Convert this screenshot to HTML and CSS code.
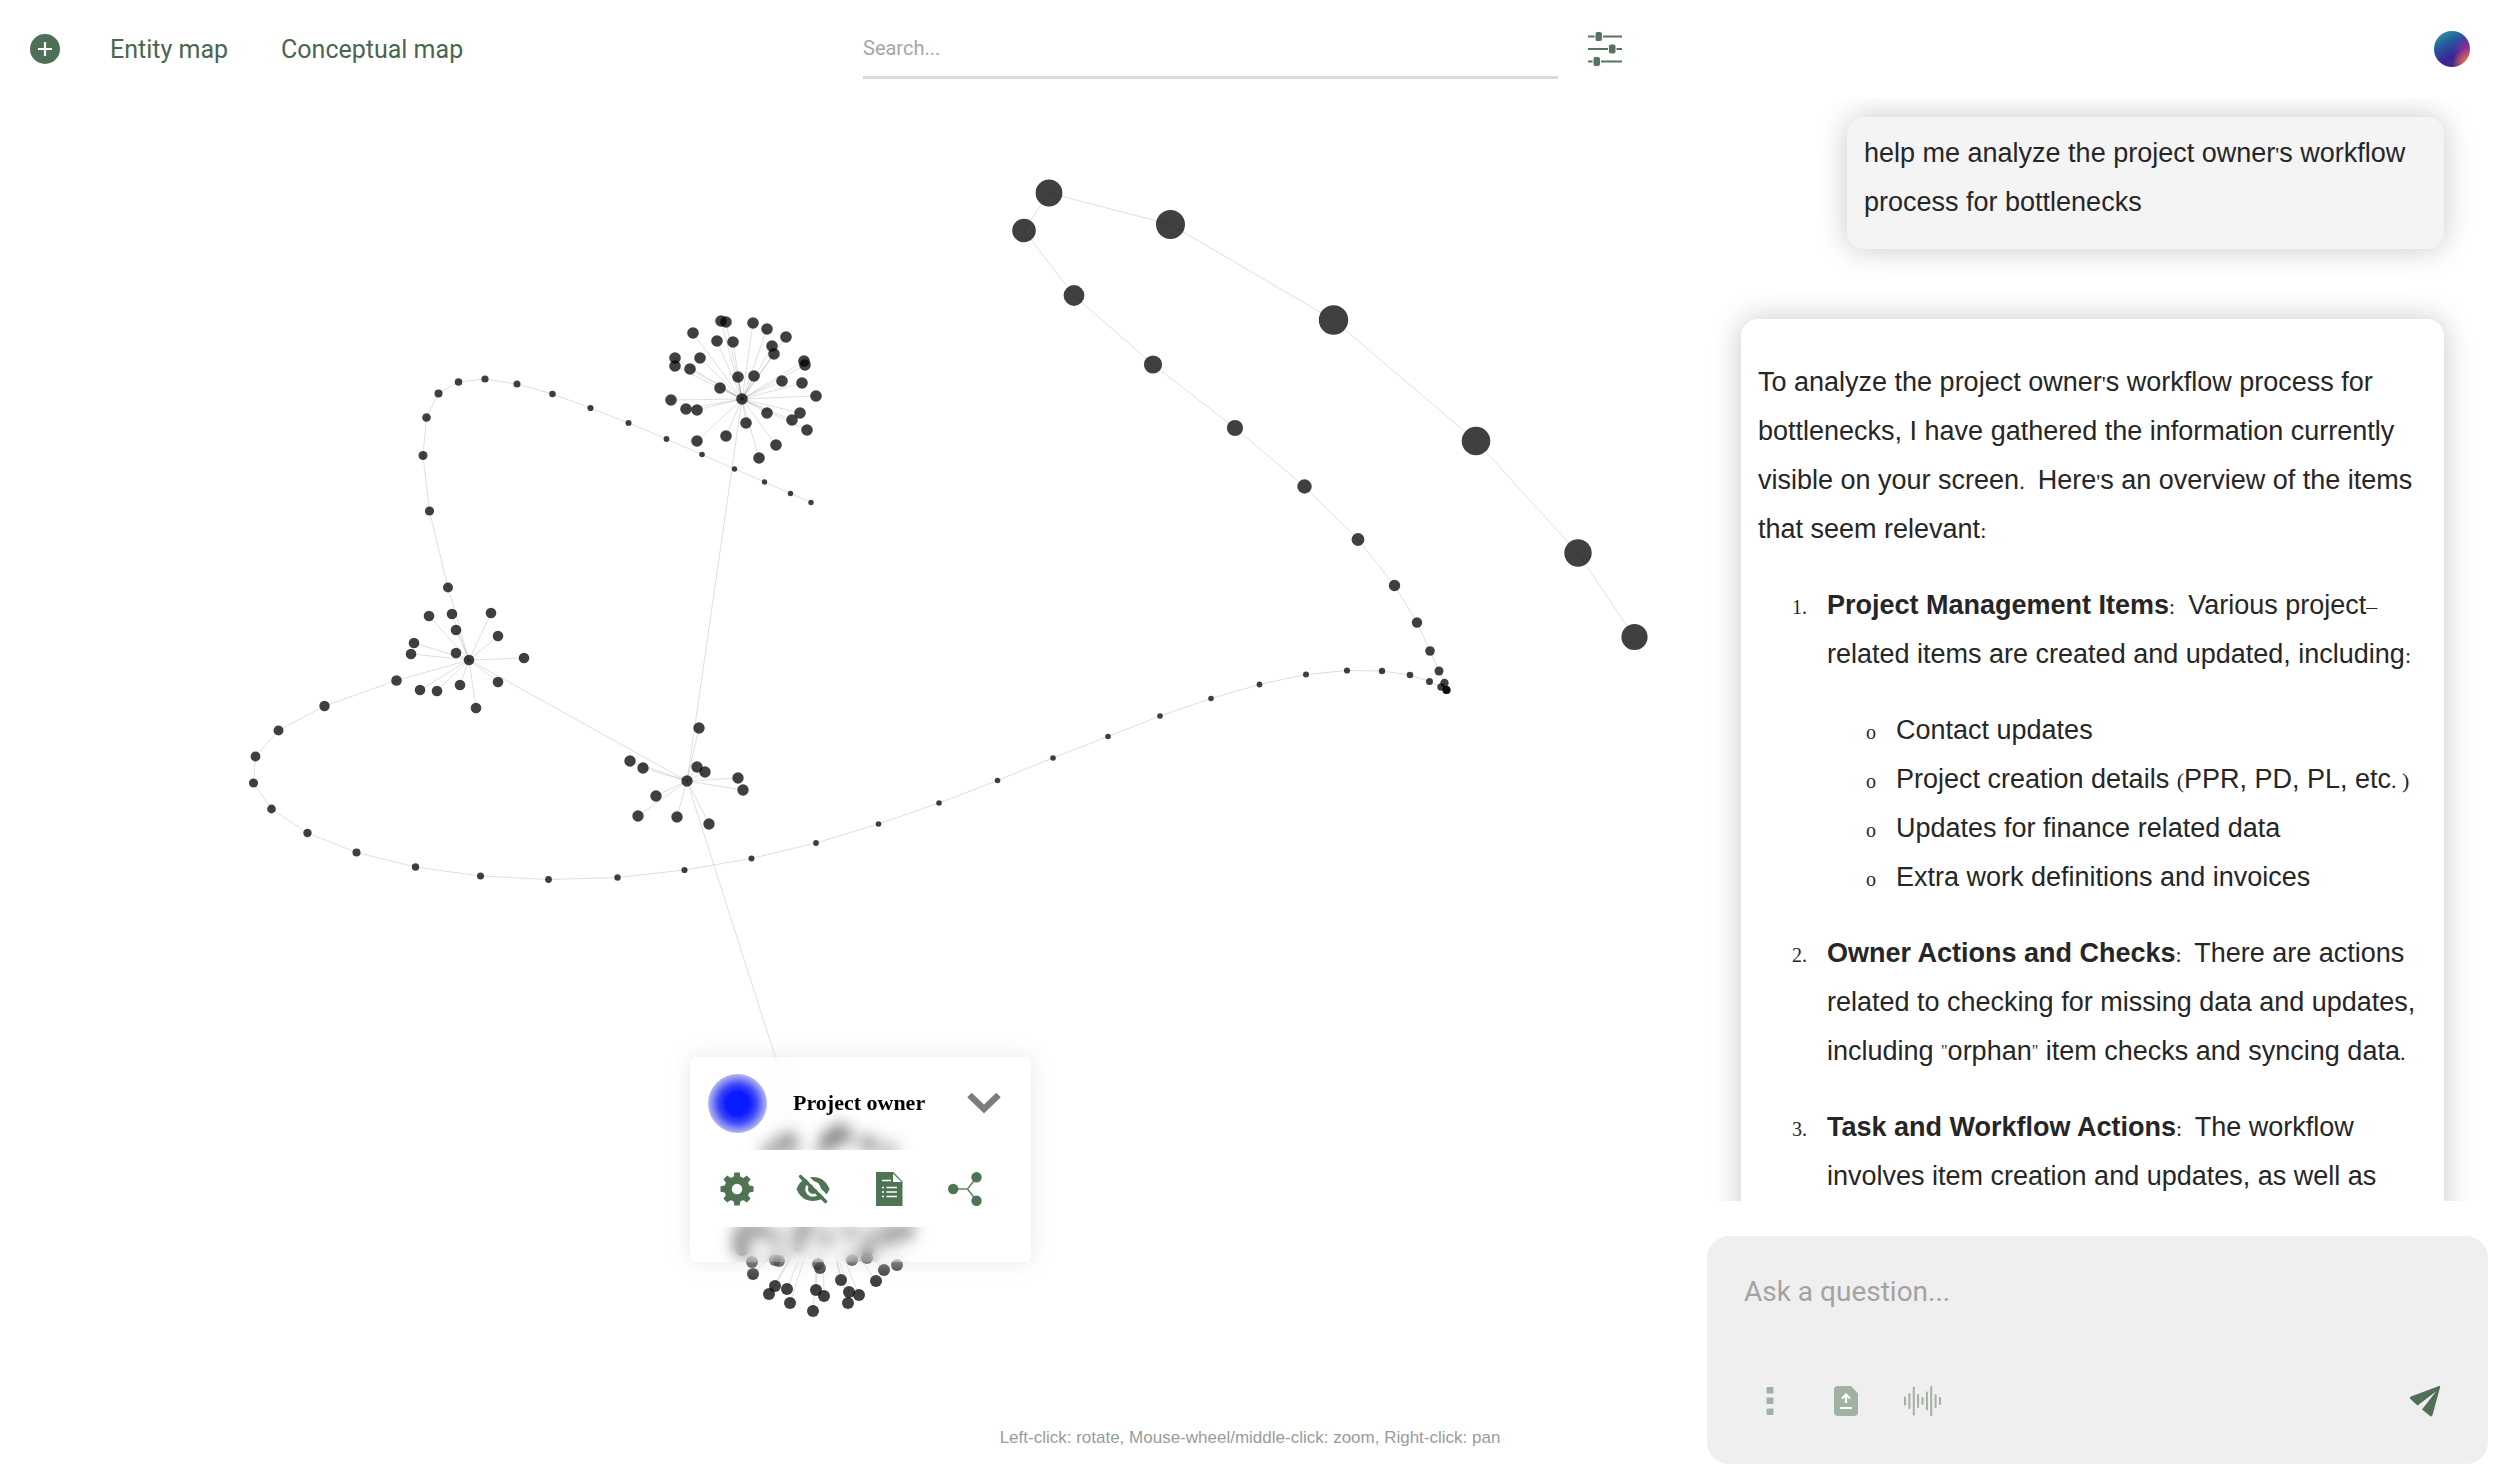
FILE: index.html
```html
<!DOCTYPE html>
<html lang="en">
<head>
<meta charset="utf-8">
<meta name="viewport" content="width=device-width, initial-scale=1">
<title>Entity map</title>
<link rel="stylesheet" href="styles.css">
</head>
<body>
<div class="app">
  <main class="map">
    <svg class="graph" id="graph" viewBox="0 0 2500 1470" preserveAspectRatio="xMidYMid meet" role="img" aria-label="Entity graph"></svg>
    <p class="hint">Left-click: rotate, Mouse-wheel/middle-click: zoom, Right-click: pan</p>
    <section class="card" aria-label="Project owner">
      <div class="card-head">
        <span class="orb"></span>
        <h2 class="card-title">Project owner</h2>
        <button class="card-toggle" type="button" aria-label="Expand">
          <svg width="34" height="22" viewBox="0 0 34 22"><path d="M2.500 3 17 17 31.500 3" fill="none" stroke="#7d7d7d" stroke-width="6.500"/></svg>
        </button>
      </div>
      <div class="card-tools">
        <button class="icon-btn" type="button" aria-label="Settings">
          <svg width="34" height="34" viewBox="0 0 34 34"><g fill="#4f7454"><path d="M14.300 0.500h5.400l1 6h-7.400zM14.300 33.500h5.400l1-6h-7.400z"/><path d="M0.500 14.300v5.400l6 1v-7.400zM33.500 14.300v5.400l-6 1v-7.400z"/><g transform="rotate(45 17 17)"><path d="M14.300 0.500h5.400l1 6h-7.400zM14.300 33.500h5.400l1-6h-7.400z"/><path d="M0.500 14.300v5.400l6 1v-7.400zM33.500 14.300v5.400l-6 1v-7.400z"/></g></g><circle cx="17" cy="17" r="9" fill="none" stroke="#4f7454" stroke-width="7.500"/></svg>
        </button>
        <button class="icon-btn" type="button" aria-label="Hide">
          <svg width="34" height="34" viewBox="0 0 34 34"><path d="M0.500 17C4 8.500 10 5 17 5s13 3.500 16.500 12C30 25.500 24 29 17 29S4 25.500 0.500 17z" fill="#4f7454"/><circle cx="17" cy="17" r="7.800" fill="#fff"/><circle cx="17" cy="17" r="5" fill="#4f7454"/><path d="M17 12a5 5 0 0 1 5 5h-5z" fill="#fff"/><path d="M7 1 34 28.500" stroke="#fff" stroke-width="4"/><path d="M4.500 4.500 29.500 29.500" stroke="#4f7454" stroke-width="3.400" stroke-linecap="round"/></svg>
        </button>
        <button class="icon-btn" type="button" aria-label="Document">
          <svg width="34" height="34" viewBox="0 0 34 34"><path d="M4 0h17.500L30.500 9.500V34H4z" fill="#4f7454"/><path d="M21 1.500 29.500 10H21z" fill="#fff"/><g stroke="#fff" stroke-width="1.700"><path d="M10 8.500h9M14.500 15.500H25M14.500 20H25M14.500 24.500H25"/><path d="M10 15.500h2M10 20h2M10 24.500h2"/></g></svg>
        </button>
        <button class="icon-btn" type="button" aria-label="Connections">
          <svg width="34" height="34" viewBox="0 0 34 34"><path d="M5 17h14.500M28.500 5.500 19.500 17l9 11.500" fill="none" stroke="#6b7f6d" stroke-width="1.600"/><g fill="#4f7454"><circle cx="5.200" cy="17" r="5.200"/><circle cx="28.500" cy="5.300" r="5.200"/><circle cx="28.500" cy="28.700" r="5.200"/></g></svg>
        </button>
      </div>
    </section>
  </main>

  <header class="topbar">
    <nav class="nav">
      <button class="plain" type="button" aria-label="Add">
        <svg width="30" height="30" viewBox="0 0 30 30"><circle cx="15" cy="15" r="15" fill="#4f7056"/><path d="M15 8v14M8 15h14" stroke="#fff" stroke-width="2.200"/></svg>
      </button>
      <a class="nav-link" href="#entity">Entity map</a>
      <a class="nav-link" href="#conceptual">Conceptual map</a>
    </nav>
    <form class="search">
      <input class="search-input" type="search" placeholder="Search..." aria-label="Search">
      <button class="filter-btn" type="button" aria-label="Filters">
        <svg width="34" height="36" viewBox="0 0 34 36"><path d="M0 5.500h34M0 18h34M0 30.500h34" stroke="#5b7160" stroke-width="1.800"/><g fill="#57735f" stroke="#fff" stroke-width="1"><rect x="7" y="0.500" width="7.500" height="10" rx="2.500"/><rect x="20.500" y="13" width="7.500" height="10" rx="2.500"/><rect x="5" y="25.500" width="7.500" height="10" rx="2.500"/></g></svg>
      </button>
    </form>
    <button class="avatar" type="button" aria-label="Account"></button>
  </header>

  <aside class="chat">
    <div class="messages">
      <div class="msg msg-user">help me analyze the project owner<span class="mark">'</span>s workflow process for bottlenecks</div>
      <div class="msg msg-bot">
        <p>To analyze the project owner<span class="mark">'</span>s workflow process for bottlenecks, I have gathered the information currently visible on your screen<span class="mark">.&nbsp;</span> Here<span class="mark">'</span>s an overview of the items that seem relevant<span class="mark">:</span></p>
        <ol>
          <li><strong>Project Management Items</strong><span class="mark">:&nbsp;</span> Various project<span class="mark">–</span>related items are created and updated, including<span class="mark">:</span>
            <ul>
              <li>Contact updates</li>
              <li>Project creation details <span class="mark">(</span>PPR, PD, PL, etc<span class="mark">.&nbsp;)</span></li>
              <li>Updates for finance related data</li>
              <li>Extra work definitions and invoices</li>
            </ul>
          </li>
          <li><strong>Owner Actions and Checks</strong><span class="mark">:&nbsp;</span> There are actions related to checking for missing data and updates, including <span class="mark quote">"</span>orphan<span class="mark quote">"</span> item checks and syncing data<span class="mark">.</span></li>
          <li><strong>Task and Workflow Actions</strong><span class="mark">:&nbsp;</span> The workflow involves item creation and updates, as well as</li>
        </ol>
      </div>
    </div>
    <form class="composer">
      <textarea class="ask" placeholder="Ask a question..." aria-label="Ask a question"></textarea>
      <div class="composer-row">
        <button class="icon-btn" type="button" aria-label="More">
          <svg width="8" height="30" viewBox="0 0 8 30" fill="#a0b3a3"><rect x="0.500" y="1" width="7" height="6.500" rx="1"/><rect x="0.500" y="11.500" width="7" height="6.500" rx="1"/><rect x="0.500" y="22.500" width="7" height="6.500" rx="1"/></svg>
        </button>
        <button class="icon-btn" type="button" aria-label="Upload file">
          <svg width="24" height="30" viewBox="0 0 24 30"><path d="M4 0h13l7 7.500V26a4 4 0 0 1-4 4H4a4 4 0 0 1-4-4V4a4 4 0 0 1 4-4z" fill="#a0b3a3"/><path d="M12 17V9M8 12.500 12 8.500l4 4M6 22h12" fill="none" stroke="#fff" stroke-width="2.200"/></svg>
        </button>
        <button class="icon-btn" type="button" aria-label="Voice">
          <svg width="37" height="30" viewBox="0 0 37 30"><path d="M1 11.500v7M5.400 8v14M9.800 1.500v27M14.100 9v12M18.500 12v6M22.900 6.500v17M27.200 1v28.500M31.600 9v12M36 12v6" stroke="#a0b3a3" stroke-width="2" stroke-linecap="round"/></svg>
        </button>
        <button class="icon-btn send" type="submit" aria-label="Send">
          <svg width="32" height="32" viewBox="0 0 32 32" fill="#4f7056"><path d="M30 1Q31.500 0.500 31.200 2L23.500 30Q22.500 32.500 20.500 30.500L13 24.500 27 6.500 8.500 20.500 1.500 14Q0 12.500 2 11.500z"/></svg>
        </button>
      </div>
    </form>
  </aside>
</div>
<script src="graph.js"></script>
</body>
</html>
```
FILE: styles.css
```css
* { box-sizing: border-box; }

body {
  margin: 0;
  background: #fff;
  color: #262626;
  font-family: "Liberation Sans", Arial, sans-serif;
}

button {
  padding: 0;
  border: 0;
  background: none;
  cursor: pointer;
}

.app {
  display: grid;
  grid-template-columns: minmax(0, 1fr) minmax(0, 793px);
  grid-template-rows: auto minmax(0, 1fr);
  height: 100vh;
}

/* map */
.map {
  grid-area: 1 / 1 / 3 / 3;
  display: grid;
  position: relative;
  min-height: 0;
}

.graph {
  grid-area: 1 / 1;
  width: 100%;
  height: 100%;
  min-height: 0;
}

.edges {
  fill: none;
  stroke: #000;
  stroke-opacity: .13;
  stroke-width: 1;
}

.node {
  fill: #000;
  fill-opacity: .75;
}

.hint {
  grid-area: 1 / 1;
  place-self: end center;
  margin: 0 0 21px;
  color: #989c9c;
  font-size: 17px;
  line-height: 22px;
}

.card {
  position: absolute;
  left: 690px;
  top: 1057px;
  width: 341px;
  padding: 16px 0 35px;
  border-radius: 6px;
  background: rgba(255, 255, 255, .25);
  backdrop-filter: blur(8px);
  box-shadow: 0 0 20px rgba(225, 225, 225, .8);
}

.card-head {
  display: flex;
  align-items: center;
  gap: 26px;
  height: 60px;
  margin-bottom: 17px;
  padding: 0 30px 0 18px;
}

.orb {
  width: 59px;
  height: 59px;
  border-radius: 50%;
  background: radial-gradient(circle, #0a1cff 28%, #3f48f8 46%, #b3b6f2 70%);
}

.card-title {
  flex: 1;
  margin: 0;
  color: #000;
  font: bold 22px/44px "Liberation Serif", "Times New Roman", serif;
}

.card-toggle, .plain { display: flex; }

.card-tools {
  display: flex;
  gap: 24px;
  height: 77px;
  margin: 0 15px;
  padding: 0 6px;
  align-items: center;
  border-radius: 26px;
  background: #fff;
}

.icon-btn {
  display: grid;
  place-items: center;
  width: 52px;
  height: 52px;
}

/* top bar */
.topbar {
  grid-area: 1 / 1 / 2 / 3;
  z-index: 1;
  display: grid;
  grid-template-columns: 1fr auto 1fr;
  align-items: center;
  min-height: 98px;
  padding: 0 30px;
}

.nav {
  display: flex;
  align-items: center;
  gap: 50px;
}

.nav-link {
  padding-top: 2px;
  color: #4a6650;
  font: 25px/32px Roboto, sans-serif;
  text-decoration: none;
}

.nav-link + .nav-link { margin-left: 3px; }

.search {
  display: flex;
  align-items: center;
  gap: 15px;
}

.search-input {
  width: 695px;
  max-width: 40vw;
  height: 60px;
  padding: 0;
  border: 0;
  border-bottom: 3px solid #dadada;
  outline: 0;
  background: none;
  color: #333;
  font: 20px/26px Roboto, sans-serif;
}

.search-input::placeholder { color: #a6a6a6; }

.filter-btn {
  display: flex;
  padding: 0 15px;
}

.avatar {
  justify-self: end;
  width: 36px;
  height: 36px;
  border-radius: 50%;
  background:
    radial-gradient(circle at 96% 92%, #f0a040 0, rgba(230, 110, 70, .7) 16%, rgba(220, 80, 90, 0) 34%),
    radial-gradient(circle at 100% 55%, #b0309a 0, rgba(150, 30, 150, 0) 42%),
    linear-gradient(150deg, #2b9dad 5%, #27589c 35%, #3b2296 65%, #5c2a86 95%);
}

/* chat */
.chat {
  grid-area: 2 / 2;
  z-index: 1;
  display: flex;
  flex-direction: column;
  gap: 35px;
  min-height: 0;
  padding: 0 12px 6px 0;
}

.messages {
  flex: 1;
  display: flex;
  flex-direction: column;
  gap: 70px;
  min-height: 0;
  padding: 19px 44px 0 34px;
  overflow: hidden;
}

.msg {
  flex: none;
  padding: 12px 17px 22px;
  border-radius: 17px;
  background: #fff;
  box-shadow: 0 0 30px rgba(0, 0, 0, .22);
  font-size: 27px;
  line-height: 49px;
}

.msg-user {
  align-self: flex-end;
  max-width: 597px;
  background: #f4f4f4;
}

.msg p { margin: 27px 0; }

.msg ol, .msg ul {
  margin: 27px 0;
  padding-left: 69px;
}

.msg ol > li + li { margin-top: 27px; }

.msg li::marker { font: 20px "Liberation Serif", serif; }

.msg ol > li::marker { content: counter(list-item) ".\00a0\00a0\00a0\00a0"; }

.msg ul > li::marker { content: "o\00a0\00a0\00a0\00a0"; }

.mark {
  font-family: "Liberation Serif", serif;
  font-size: 22px;
  line-height: 22px;
}

.quote {
  font-size: 16px;
  vertical-align: 4px;
}

.composer {
  padding: 37px;
  border-radius: 22px;
  background: #efefef;
}

.ask {
  display: block;
  width: 100%;
  height: 102px;
  padding: 0;
  border: 0;
  outline: 0;
  resize: none;
  background: none;
  color: #333;
  font: 28px/37px Roboto, sans-serif;
}

.ask::placeholder { color: #a3a3a3; }

.composer-row {
  display: flex;
  gap: 24px;
}

.send { margin-left: auto; }
```
FILE: graph.js
```js
// Hubs: [x, y, node radius, satellites]
const hubs = [
  [469, 660, 5.3, [[429,616],[452,614],[491,613],[456,630],[498,636],[414,643],[411,654],[456,653],[524,658],[420,690],[437,691],[460,685],[498,682],[476,708]]],
  [687, 781, 5.7, [[699,728],[630,761],[643,768],[697,767],[705,772],[738,778],[743,790],[656,796],[638,816],[677,817],[709,824]]],
  [742, 399, 5.8, [[693,333],[717,341],[733,342],[721,321],[726,322],[753,323],[767,329],[786,337],[772,346],[774,354],[804,361],[805,365],[675,358],[675,366],[690,369],[700,358],[738,377],[754,376],[782,381],[802,383],[720,388],[816,396],[671,400],[686,409],[697,410],[767,413],[800,413],[792,420],[807,430],[746,423],[726,436],[697,441],[776,445],[759,458]]],
  [822, 1203, 6, [[752,1262],[753,1274],[775,1260],[779,1261],[775,1286],[769,1294],[787,1289],[790,1303],[818,1264],[820,1268],[816,1290],[824,1296],[813,1311],[841,1280],[849,1292],[848,1303],[859,1295],[876,1281],[884,1270],[897,1265],[852,1260],[867,1258],
    [742,1250],[740,1238],[756,1232],[762,1230],[776,1238],[800,1232],[798,1246],[806,1228],[826,1238],[850,1232],[872,1236],[888,1240],[904,1234],[908,1229],[744,1226],[740,1246],[868,1250],[890,1230],
    [778,1146],[788,1138],[792,1146],[834,1134],[842,1130],[828,1142],[846,1138],[824,1148],[866,1142],[872,1146],[890,1150],[768,1152],[752,1170],[740,1190],[908,1180],[912,1204],[800,1170],[850,1176],[830,1138]]]
];

// Chains: [x, y, radius] in order
const chains = [
  [[469,660,5.3],[448,587.5,5],[429.5,511,4.6],[423,455.5,4.5],[426.5,417.5,4.3],[438.5,393.5,4],[458.5,382,3.8],[485,379,3.6],[517,384,3.5],[552.5,394,3.3],[590.5,408,3.1],[628.5,423,3],[666.5,439,2.9],[702,454.5,2.8],[734.5,469,2.7],[764.5,482,2.7],[790.5,493.5,2.7],[811,502.5,2.7]],
  [[469,660,5.3],[396.5,680.5,5.3],[324.5,706,5.2],[278.5,730.5,5],[255.5,756.5,4.9],[253.5,783,4.6],[271.5,809,4.4],[307.5,833,4.2],[356.5,852.5,4],[415.5,867,3.7],[480.5,876,3.5],[548.5,879.5,3.4],[617.5,877.5,3.2],[684.5,870,3.1],[751.5,858.5,3],[816,843,2.9],[878.5,824,2.8],[939,803,2.8],[997.5,780.5,2.8],[1053,758,2.8],[1108,736.5,2.8],[1160,716,2.8],[1211,698.5,2.8],[1259.5,684.5,2.9],[1306,674.5,3],[1347,670.5,3.1],[1382,671,3.2],[1410,675,3.3],[1429.5,681.5,3.5],[1441,687,3.7],[1446.5,690,4],[1446.5,690,4],[1444.5,683,4.2],[1439,671,4.5],[1430,651,4.8],[1417,622.5,5.2],[1394.5,585.5,5.7],[1358,539.5,6.4],[1304.5,486.5,7.2],[1235,428,8.1],[1153,364.5,9.1],[1074,295.5,10.4],[1024,230.5,11.8],[1049,193,13.4],[1170.5,224.5,14.5],[1333.5,320,14.7],[1476,441,14.3],[1578,553,13.7],[1634.5,637,13.1]]
];

const hubLinks = [[0, 1], [2, 1], [1, 3]];

const NS = 'http://www.w3.org/2000/svg';
const graph = document.getElementById('graph');
const add = (tag, attrs) => {
  const el = document.createElementNS(NS, tag);
  for (const key in attrs) el.setAttribute(key, attrs[key]);
  graph.append(el);
};
const addNode = (x, y, r) => add('circle', { class: 'node', cx: x, cy: y, r });

let d = '';
for (const [x, y, , sats] of hubs) {
  for (const [sx, sy] of sats) d += `M${x} ${y}L${sx} ${sy}`;
}
for (const chain of chains) {
  d += 'M' + chain.map(([x, y]) => `${x} ${y}`).join('L');
}
for (const [a, b] of hubLinks) {
  d += `M${hubs[a][0]} ${hubs[a][1]}L${hubs[b][0]} ${hubs[b][1]}`;
}
add('path', { class: 'edges', d });

for (const [x, y, r, sats] of hubs) {
  addNode(x, y, r);
  for (const [sx, sy] of sats) addNode(sx, sy, r);
}
for (const chain of chains) {
  chain.forEach(([x, y, r], i) => {
    if (i > 0) addNode(x, y, r);
  });
}
```
